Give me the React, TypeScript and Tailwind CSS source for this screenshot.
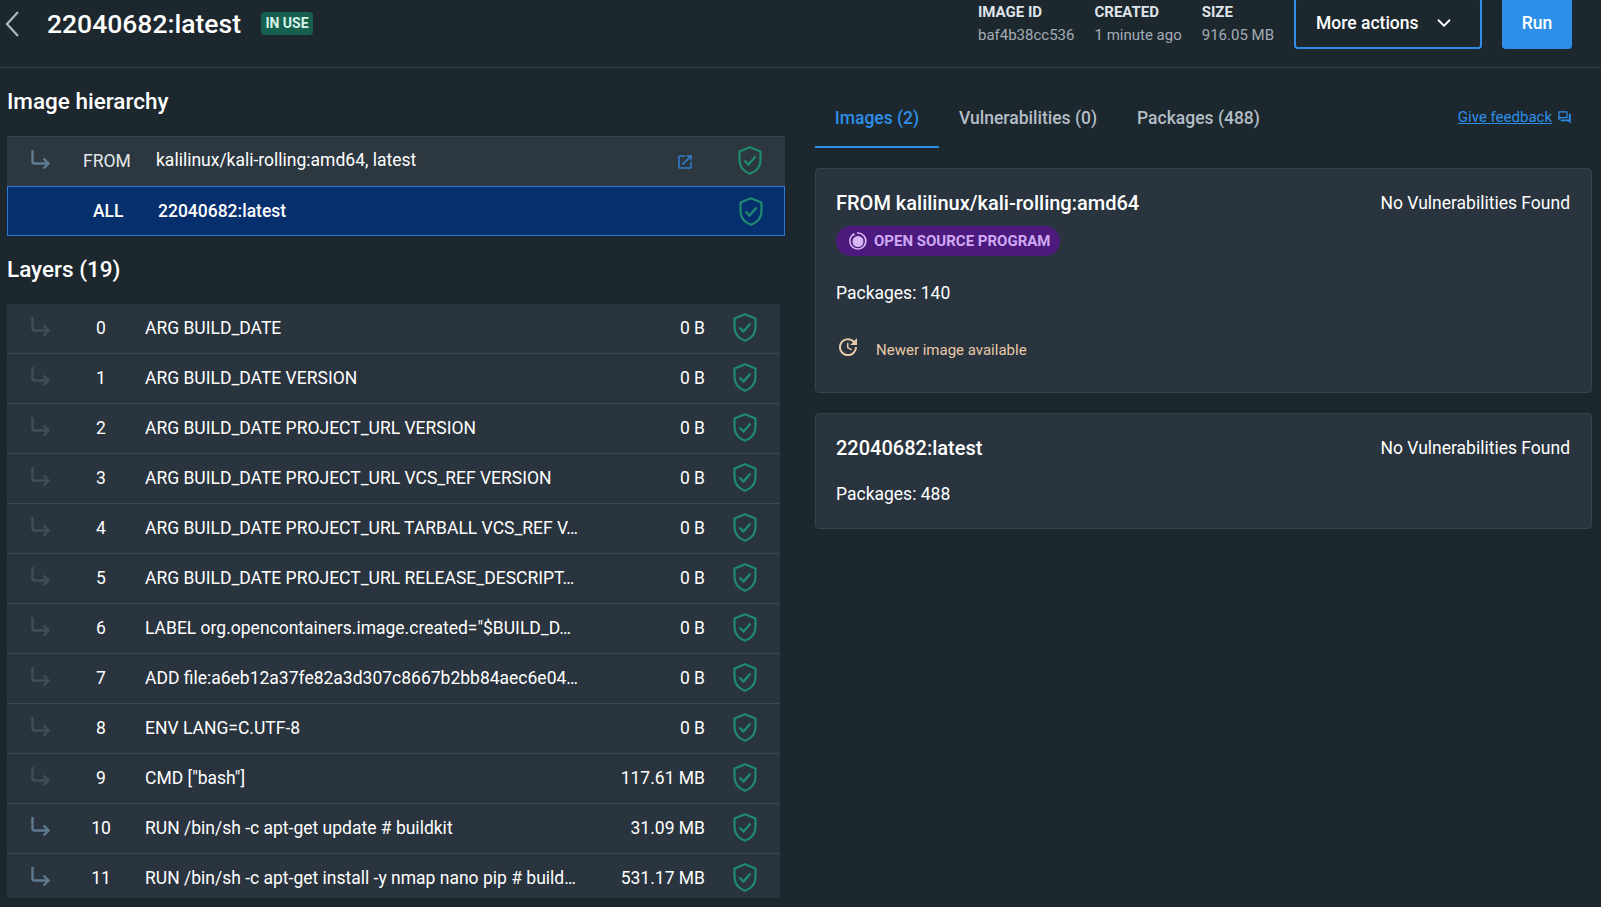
import { ChevronDown } from "lucide-react";
import { MdOpenInNew, MdOutlineQuestionAnswer, MdUpdate } from "react-icons/md";

const layers = [
  { id: 0, cmd: "ARG BUILD_DATE", size: "0 B" },
  { id: 1, cmd: "ARG BUILD_DATE VERSION", size: "0 B" },
  { id: 2, cmd: "ARG BUILD_DATE PROJECT_URL VERSION", size: "0 B" },
  { id: 3, cmd: "ARG BUILD_DATE PROJECT_URL VCS_REF VERSION", size: "0 B" },
  { id: 4, cmd: "ARG BUILD_DATE PROJECT_URL TARBALL VCS_REF V…", size: "0 B" },
  { id: 5, cmd: "ARG BUILD_DATE PROJECT_URL RELEASE_DESCRIPT…", size: "0 B" },
  { id: 6, cmd: 'LABEL org.opencontainers.image.created="$BUILD_D…', size: "0 B" },
  { id: 7, cmd: "ADD file:a6eb12a37fe82a3d307c8667b2bb84aec6e04…", size: "0 B" },
  { id: 8, cmd: "ENV LANG=C.UTF-8", size: "0 B" },
  { id: 9, cmd: 'CMD ["bash"]', size: "117.61 MB" },
  { id: 10, cmd: "RUN /bin/sh -c apt-get update # buildkit", size: "31.09 MB", active: true },
  { id: 11, cmd: "RUN /bin/sh -c apt-get install -y nmap nano pip # build…", size: "531.17 MB", active: true },
];

function Shield({ className = "" }: { className?: string }) {
  return (
    <svg width="24" height="29" viewBox="0 0 24 29" fill="none" stroke="#1f8a70" strokeWidth="2.2" className={`shrink-0 ${className}`}>
      <path d="M12 1.2 L22.5 5.6 V14 C22.5 20.5 18 25.5 12 27.8 C6 25.5 1.5 20.5 1.5 14 V5.6 Z" strokeLinejoin="round" />
      <path d="M6.5 14.5 L10.5 18.5 L17.5 10.5" strokeWidth="2.4" />
    </svg>
  );
}

function Elbow({ color }: { color: string }) {
  return (
    <svg width="20" height="20" viewBox="0 0 20 20" fill="none" stroke={color} strokeWidth="2.4" className="mb-[6px] shrink-0">
      <path d="M2.5 1 V12.5 Q2.5 14.5 4.5 14.5 H18" />
      <path d="M13.5 9.5 L18.5 14.5 L13.5 19.5" />
    </svg>
  );
}

function OpenSourceIcon() {
  return (
    <svg width="20" height="20" viewBox="0 0 20 20" fill="none" className="shrink-0">
      <path d="M5 3.6 A8 8 0 1 0 9 2" stroke="#d6b8f5" strokeWidth="1.6" />
      <circle cx="10" cy="10.5" r="5.5" fill="#d6b8f5" />
      <circle cx="5.5" cy="3.5" r="1.2" fill="#d6b8f5" />
    </svg>
  );
}

export default function App() {
  return (
    <div className="flex h-[907px] w-[1601px] flex-col overflow-hidden bg-[#1d272e] font-['Roboto',sans-serif] text-white">
      <header className="flex h-[68px] shrink-0 items-start border-b border-[#39434b] pr-[29px]">
        <svg width="16" height="28" viewBox="0 0 16 28" fill="none" stroke="#aeb8c0" strokeWidth="2.2" className="mt-[10px] ml-[4px] shrink-0">
          <path d="M14 2 L3 14 L14 26" />
        </svg>
        <h1 className="mt-[7px] ml-[27px] text-[26.5px] leading-[34px] font-medium">22040682:latest</h1>
        <span className="mt-[12px] ml-[20px] flex h-[23px] w-[52px] items-center justify-center rounded bg-[#17604f] text-[14px] font-bold text-[#d5f2e8]">
          IN USE
        </span>
        <div className="ml-auto flex gap-[20px] pt-[2px] text-[15px]">
          <div>
            <div className="leading-[20px] font-bold text-[#dfe4e8]">IMAGE ID</div>
            <div className="mt-[3px] leading-[20px] text-[#a3adb5]">baf4b38cc536</div>
          </div>
          <div>
            <div className="leading-[20px] font-bold text-[#dfe4e8]">CREATED</div>
            <div className="mt-[3px] leading-[20px] text-[#a3adb5]">1 minute ago</div>
          </div>
          <div>
            <div className="leading-[20px] font-bold text-[#dfe4e8]">SIZE</div>
            <div className="mt-[3px] leading-[20px] text-[#a3adb5]">916.05 MB</div>
          </div>
        </div>
        <button className="mt-[-3px] ml-[20px] flex h-[52px] w-[188px] items-center gap-[14px] rounded border-2 border-[#2e8fe8] pl-[20px] text-[17.5px] font-medium">
          More actions
          <ChevronDown size={22} />
        </button>
        <button className="mt-[-3px] ml-[20px] h-[52px] w-[70px] rounded bg-[#2e8fe8] text-[17.5px] font-medium">Run</button>
      </header>

      <div className="flex min-h-0 flex-1">
        <section className="flex w-[815px] shrink-0 flex-col pl-[7px]">
          <h2 className="mt-[18px] text-[22.5px] leading-[30px] font-medium">Image hierarchy</h2>
          <div className="mt-[20px] w-[778px]">
            <div className="flex h-[50px] items-center border-t border-[#3a454e] bg-[#2c3740]">
              <div className="ml-[23px] w-[22px]">
                <Elbow color="#5e7a90" />
              </div>
              <div className="ml-[31px] w-[73px] text-[17.5px] text-[#e3e7ea]">FROM</div>
              <div className="flex-1 pb-[2px] text-[17.5px]">kalilinux/kali-rolling:amd64, latest</div>
              <MdOpenInNew size={18} className="mr-[44px] text-[#2f7fd0]" />
              <Shield className="mb-[3px]" />
              <div className="w-[23px]" />
            </div>
            <div className="flex h-[50px] items-center border border-[#2f76d2] bg-[#05306d] pt-[1px]">
              <div className="ml-[85px] w-[65px] text-[17.5px] font-medium">ALL</div>
              <div className="flex-1 text-[17.5px] font-medium">22040682:latest</div>
              <Shield />
              <div className="w-[21px]" />
            </div>
          </div>
          <h2 className="mt-[18px] text-[22.5px] leading-[30px] font-medium">Layers (19)</h2>
          <div className="mt-[20px] h-[594px] w-[773px] overflow-hidden bg-[#29343e]">
            {layers.map((l) => (
              <div key={l.id} className="flex h-[50px] items-center border-b border-[#3c4751]">
                <div className="ml-[23px] w-[22px]">
                  <Elbow color={l.active ? "#5e7a90" : "#3e4e5b"} />
                </div>
                <div className="ml-[29px] w-[40px] text-center text-[17.5px]">{l.id}</div>
                <div className="ml-[24px] w-[438px] truncate text-[17.5px]">{l.cmd}</div>
                <div className="flex-1 text-right text-[17.5px]">{l.size}</div>
                <div className="ml-[28px]">
                  <Shield className="mb-[2px]" />
                </div>
                <div className="w-[23px]" />
              </div>
            ))}
          </div>
        </section>

        <section className="min-w-0 flex-1 pr-[9px]">
          <div className="flex h-[80px] items-start">
            <div className="mt-[33px] flex h-[47px] w-[124px] justify-center border-b-2 border-[#2e8fe8] text-[17.5px] leading-[34px] font-medium text-[#2e8fe8]">
              Images (2)
            </div>
            <div className="mt-[33px] ml-[20px] text-[17.5px] leading-[34px] font-medium text-[#b4bec6]">Vulnerabilities (0)</div>
            <div className="mt-[33px] ml-[40px] text-[17.5px] leading-[34px] font-medium text-[#b4bec6]">Packages (488)</div>
            <div className="mt-[38px] mr-[20px] ml-auto flex items-center gap-[5px] text-[15px] text-[#2e8fe8]">
              <span className="underline">Give feedback</span>
              <MdOutlineQuestionAnswer size={15} />
            </div>
          </div>

          <div className="mt-[20px] flex h-[225px] flex-col rounded border border-[#36424d] bg-[#29343e] pt-[20px] pr-[21px] pl-[20px]">
            <div className="flex items-center justify-between">
              <div className="text-[20px] leading-[28px] font-medium">FROM kalilinux/kali-rolling:amd64</div>
              <div className="text-[17.5px]">No Vulnerabilities Found</div>
            </div>
            <div className="mt-[9px] flex h-[30px] w-[224px] items-center gap-[6px] rounded-full bg-[#4b1a7c] pl-[12px] text-[15px] font-bold text-[#d0a9f5]">
              <OpenSourceIcon />
              OPEN SOURCE PROGRAM
            </div>
            <div className="mt-[25px] text-[17.5px] leading-[24px]">Packages: 140</div>
            <div className="mt-[34px] flex items-center gap-[16px] text-[15px] text-[#e8c9a8]">
              <MdUpdate size={24} className="mt-[-7px]" />
              Newer image available
            </div>
          </div>

          <div className="mt-[20px] flex h-[116px] flex-col rounded border border-[#36424d] bg-[#29343e] pt-[20px] pr-[21px] pl-[20px]">
            <div className="flex items-center justify-between">
              <div className="text-[20px] leading-[28px] font-medium">22040682:latest</div>
              <div className="text-[17.5px]">No Vulnerabilities Found</div>
            </div>
            <div className="mt-[20px] text-[17.5px] leading-[24px]">Packages: 488</div>
          </div>
        </section>
      </div>
    </div>
  );
}
